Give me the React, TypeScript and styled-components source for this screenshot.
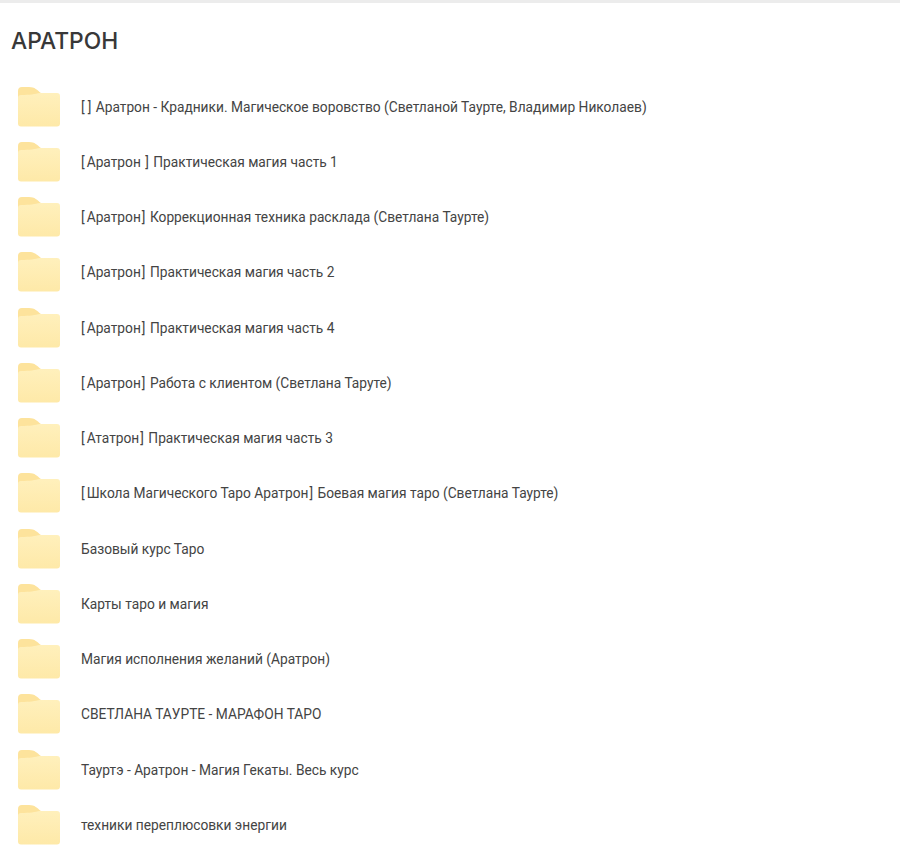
import React from "react";
import styled, { createGlobalStyle } from "styled-components";

const Global = createGlobalStyle`
  html, body { margin: 0; padding: 0; background: #fff; }
  body { font-family: Roboto, "Liberation Sans", sans-serif; overflow: hidden; }
`;
const Page = styled.div`
  height: 862px;
  border-top: 3px solid #ececec;
  box-sizing: border-box;
`;
const Title = styled.h1`
  margin: 0;
  padding: 23px 0 0 11px;
  height: 52.9px;
  box-sizing: content-box;
  font: 500 22.8px/30px Inter, "Liberation Sans", sans-serif;
  color: #383838;
`;
const List = styled.ul`
  list-style: none;
  margin: 0;
  padding: 0 0 0 17px;
  display: grid;
  grid-auto-rows: 55.25px;
`;
const Row = styled.li`
  display: flex;
  align-items: center;
  gap: 20px;
`;
const Name = styled.span`
  font-size: 13.75px;
  line-height: 20px;
  color: #444;
`;
const Bracket = styled.span`
  padding: 0 1px;
  &:first-child {
    padding-left: 0;
    padding-right: 2px;
  }
`;
const Icon = styled.svg`
  width: 44px;
  height: 40px;
  flex: none;
`;

const items = [
  "[] Аратрон - Крадники. Магическое воровство (Светланой Таурте, Владимир Николаев)",
  "[Аратрон ] Практическая магия часть 1",
  "[Аратрон] Коррекционная техника расклада (Светлана Таурте)",
  "[Аратрон] Практическая магия часть 2",
  "[Аратрон] Практическая магия часть 4",
  "[Аратрон] Работа с клиентом (Светлана Таруте)",
  "[Ататрон] Практическая магия часть 3",
  "[Школа Магического Таро Аратрон] Боевая магия таро (Светлана Таурте)",
  "Базовый курс Таро",
  "Карты таро и магия",
  "Магия исполнения желаний (Аратрон)",
  "СВЕТЛАНА ТАУРТЕ - МАРАФОН ТАРО",
  "Тауртэ - Аратрон - Магия Гекаты. Весь курс",
  "техники переплюсовки энергии",
];

const Folder = ({ id }: { id: number }) => (
  <Icon viewBox="0 0 44 40">
    <defs>
      <linearGradient id={`f${id}`} x1="0" y1="0" x2="0" y2="1">
        <stop offset="0" stopColor="#fff0bc" />
        <stop offset="1" stopColor="#fee9a8" />
      </linearGradient>
    </defs>
    <path d="M1 10V4a4 4 0 0 1 4-4h7c6 0 8 3 12 6v6H1z" fill="#fde39c" />
    <path d="M1 11c0-2 1-3 3-3 9 0 14-1 19-2h17a3 3 0 0 1 3 3v27.500a3 3 0 0 1-3 3H4a3 3 0 0 1-3-3z" fill={`url(#f${id})`} />
  </Icon>
);

const withBrackets = (t: string) =>
  t.split(/([\[\]])/).filter(Boolean).map((part, i) =>
    part === "[" || part === "]" ? <Bracket key={i}>{part}</Bracket> : part
  );

export default function App() {
  return (
    <Page>
      <Global />
      <Title>АРАТРОН</Title>
      <List>
        {items.map((t, i) => (
          <Row key={t}>
            <Folder id={i} />
            <Name>{withBrackets(t)}</Name>
          </Row>
        ))}
      </List>
    </Page>
  );
}
